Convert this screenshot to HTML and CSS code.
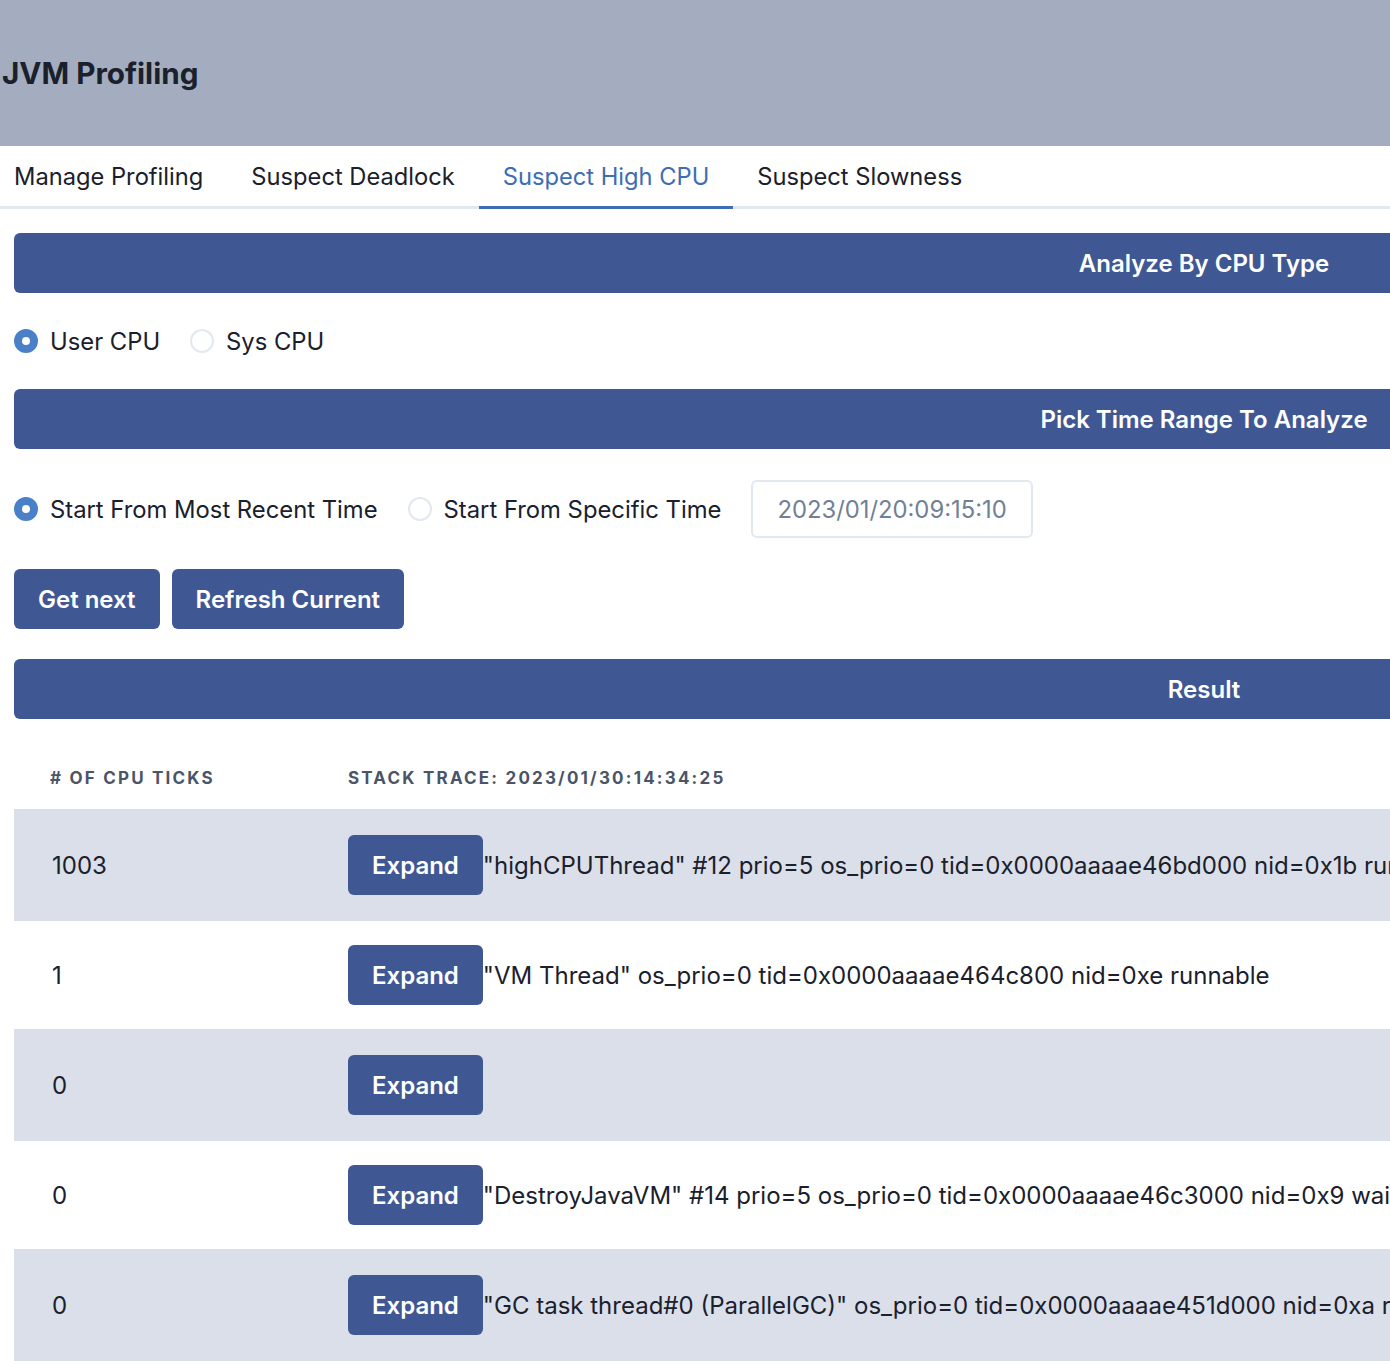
FILE: index.html
```html
<!DOCTYPE html>
<html>
<head>
<meta charset="utf-8">
<link rel="stylesheet" href="styles.css">
</head>
<body>
<header class="topbar"><h1 class="title">JVM Profiling</h1></header>
<nav class="tabs">
  <div class="tab tab-first">Manage Profiling</div>
  <div class="tab">Suspect Deadlock</div>
  <div class="tab tab-active">Suspect High CPU</div>
  <div class="tab">Suspect Slowness</div>
</nav>
<main class="content">
  <div class="bar">Analyze By CPU Type</div>
  <div class="radio-row">
    <label class="radio"><span class="dot dot-on"></span>User CPU</label>
    <label class="radio"><span class="dot"></span>Sys CPU</label>
  </div>
  <div class="bar">Pick Time Range To Analyze</div>
  <div class="radio-row radio-row-tall">
    <label class="radio"><span class="dot dot-on"></span>Start From Most Recent Time</label>
    <label class="radio"><span class="dot"></span>Start From Specific Time</label>
    <div class="input">2023/01/20:09:15:10</div>
  </div>
  <div class="buttons">
    <button class="btn">Get next</button>
    <button class="btn">Refresh Current</button>
  </div>
  <div class="bar bar-result">Result</div>
  <div class="table">
    <div class="thead">
      <div class="th c1"># of CPU ticks</div>
      <div class="th c2">Stack trace: 2023/01/30:14:34:25</div>
    </div>
    <div class="row row-shade">
      <div class="c1 num">1003</div>
      <div class="c2 trace"><button class="btn btn-exp">Expand</button><span>"highCPUThread" #12 prio=5 os_prio=0 tid=0x0000aaaae46bd000 nid=0x1b runnable [0x0000ffff6a1fe000]</span></div>
    </div>
    <div class="row">
      <div class="c1 num">1</div>
      <div class="c2 trace"><button class="btn btn-exp">Expand</button><span>"VM Thread" os_prio=0 tid=0x0000aaaae464c800 nid=0xe runnable</span></div>
    </div>
    <div class="row row-shade">
      <div class="c1 num">0</div>
      <div class="c2 trace"><button class="btn btn-exp">Expand</button><span></span></div>
    </div>
    <div class="row">
      <div class="c1 num">0</div>
      <div class="c2 trace"><button class="btn btn-exp">Expand</button><span>"DestroyJavaVM" #14 prio=5 os_prio=0 tid=0x0000aaaae46c3000 nid=0x9 waiting on condition [0x0000000000000000]</span></div>
    </div>
    <div class="row row-shade">
      <div class="c1 num">0</div>
      <div class="c2 trace"><button class="btn btn-exp">Expand</button><span>"GC task thread#0 (ParallelGC)" os_prio=0 tid=0x0000aaaae451d000 nid=0xa runnable</span></div>
    </div>
  </div>
</main>
</body>
</html>
```
FILE: styles.css
```css
html, body {
  margin: 0;
  padding: 0;
  overflow: hidden;
}
body {
  font-family: Inter, "Noto Sans", sans-serif;
  color: #1a202c;
  background: #fff;
  width: 1390px;
}
.topbar {
  background: #a3adbf;
  height: 146px;
  display: flex;
  align-items: center;
}
.title {
  margin: 0 0 0 2px;
  font-size: 29.7px;
  font-weight: 700;
  color: #1a202c;
}
.tabs {
  display: flex;
  border-bottom: 3px solid #e2e8f0;
  height: 60px;
}
.tab {
  padding: 0 24px;
  font-size: 23.7px;
  display: flex;
  align-items: center;
  margin-bottom: -3px;
  border-bottom: 3px solid transparent;
  white-space: nowrap;
}
.tab-first {
  padding-left: 14px;
}
.tab-active {
  color: #3d6db3;
  border-bottom-color: #3d6db3;
}
.content {
  padding-left: 14px;
  padding-top: 24px;
  width: 2380px;
}
.bar {
  background: #3f5894;
  color: #fff;
  height: 60px;
  border-radius: 6px;
  display: flex;
  align-items: center;
  justify-content: center;
  font-size: 24px;
  font-weight: 600;
}
.radio-row {
  display: flex;
  align-items: center;
  height: 48px;
  margin: 24px 0;
  gap: 30px;
}
.radio-row-tall {
  height: 72px;
  margin-bottom: 24px;
}
.radio {
  display: flex;
  align-items: center;
  gap: 12px;
  font-size: 23.8px;
  white-space: nowrap;
}
.dot {
  width: 24px;
  height: 24px;
  border-radius: 50%;
  box-sizing: border-box;
  border: 2px solid #e2e8f0;
}
.dot-on {
  border: 8px solid #4a80c8;
  background: #fff;
}
.input {
  height: 58px;
  box-sizing: border-box;
  border: 2px solid #e2e8f0;
  border-radius: 6px;
  padding: 0 24px;
  display: flex;
  align-items: center;
  font-size: 23.8px;
  color: #718096;
}
.buttons {
  display: flex;
  gap: 12px;
  margin-bottom: 30px;
}
.btn {
  font-family: inherit;
  background: #3f5894;
  color: #fff;
  border: none;
  border-radius: 6px;
  height: 60px;
  padding: 0 24px;
  font-size: 24px;
  font-weight: 600;
  cursor: pointer;
}
.thead {
  display: flex;
  margin-top: 24px;
}
.th {
  padding: 24px 0 20px 36px;
  line-height: 22px;
  font-size: 17px;
  font-weight: 700;
  text-transform: uppercase;
  letter-spacing: 2.2px;
  color: #4a5568;
  box-sizing: border-box;
}
.c1 {
  width: 334px;
  padding-left: 36px;
  box-sizing: border-box;
  flex: none;
}
.c2 {
  padding-left: 0;
  flex: 1;
}
.thead .c2 { padding-left: 0; }
.row {
  display: flex;
  align-items: center;
  padding: 24px 0;
  font-size: 24px;
}
.row-shade {
  background: #dadfea;
  padding: 26px 0;
}
.num {
  padding-left: 38px;
}
.trace {
  display: flex;
  align-items: center;
  white-space: nowrap;
}
.btn-exp {
  flex: none;
}
```
